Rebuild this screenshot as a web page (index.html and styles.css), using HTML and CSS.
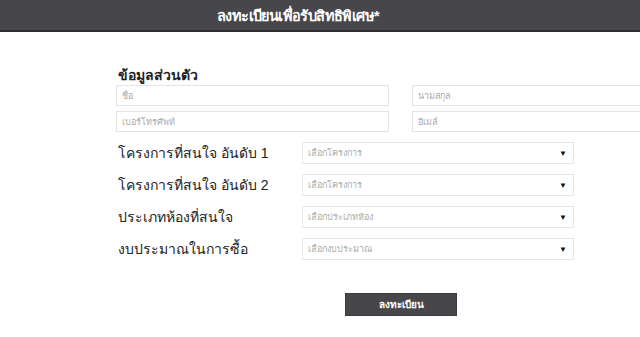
FILE: index.html
```html
<!DOCTYPE html>
<html lang="th">
<head>
  <meta charset="UTF-8">
  <title>ลงทะเบียนเพื่อรับสิทธิพิเศษ</title>
  <link rel="stylesheet" href="styles.css">
</head>
<body>
  <div class="topbar">
    <h1>ลงทะเบียนเพื่อรับสิทธิพิเศษ*</h1>
  </div>

  <form class="regform">
    <h2>ข้อมูลส่วนตัว</h2>
    <div class="pair">
      <input type="text" placeholder="ชื่อ">
      <input type="text" placeholder="นามสกุล">
    </div>
    <div class="pair">
      <input type="text" placeholder="เบอร์โทรศัพท์">
      <input type="text" placeholder="อีเมล์">
    </div>

    <div class="choices">
      <div class="choice">
        <label>โครงการที่สนใจ อันดับ 1</label>
        <div class="pick"><span>เลือกโครงการ</span><i>▼</i></div>
      </div>
      <div class="choice">
        <label>โครงการที่สนใจ อันดับ 2</label>
        <div class="pick"><span>เลือกโครงการ</span><i>▼</i></div>
      </div>
      <div class="choice">
        <label>ประเภทห้องที่สนใจ</label>
        <div class="pick"><span>เลือกประเภทห้อง</span><i>▼</i></div>
      </div>
      <div class="choice">
        <label>งบประมาณในการซื้อ</label>
        <div class="pick"><span>เลือกงบประมาณ</span><i>▼</i></div>
      </div>
    </div>

    <div class="send">
      <button type="submit">ลงทะเบียน</button>
    </div>
  </form>
</body>
</html>
```

FILE: styles.css
```css
body {
  margin: 0;
  font-family: "Liberation Sans", Arial, sans-serif;
  background: #fff;
  color: #222;
  overflow: hidden;
  width: 640px;
}
.topbar {
  height: 30px;
  background: #47464b;
  border-bottom: 2px solid #2f2e32;
  display: flex;
  align-items: center;
  justify-content: center;
  padding-right: 44px;
}
.topbar h1 {
  margin: 0;
  color: #fff;
  font-size: 14.5px;
  font-weight: bold;
  letter-spacing: -0.6px;
}
.regform {
  padding: 33px 0 0 116px;
}
.regform h2 {
  margin: 0 0 0 2px;
  font-size: 14px;
  line-height: 20px;
  font-weight: bold;
  color: #222;
}
.pair {
  display: flex;
  gap: 23px;
  margin-bottom: 5px;
  width: 600px;
}
.pair input {
  width: 273px;
  flex: none;
  height: 21px;
  box-sizing: border-box;
  border: 1px solid #e3e3e3;
  padding: 0 5px;
  font-family: inherit;
  font-size: 9px;
  color: #999;
}
.pair input::placeholder {
  color: #aaa;
}
.choices {
  margin-top: 10px;
}
.choice {
  display: flex;
  align-items: center;
  margin-bottom: 10px;
}
.choice label {
  width: 186px;
  box-sizing: border-box;
  padding-left: 2px;
  font-size: 14px;
  line-height: 22px;
  color: #222;
}
.pick {
  width: 272px;
  height: 22px;
  box-sizing: border-box;
  border: 1px solid #e6e6e6;
  display: flex;
  align-items: center;
  justify-content: space-between;
  padding: 0 6px 0 5px;
  font-size: 9px;
  color: #aaa;
}
.pick i {
  font-style: normal;
  font-size: 8px;
  color: #111;
}
.send {
  padding: 23px 0 0 229px;
}
.send button {
  width: 112px;
  height: 23px;
  background: #47464b;
  color: #fff;
  border: 1px solid #3a393d;
  font-family: inherit;
  font-size: 10px;
  font-weight: bold;
}
```
